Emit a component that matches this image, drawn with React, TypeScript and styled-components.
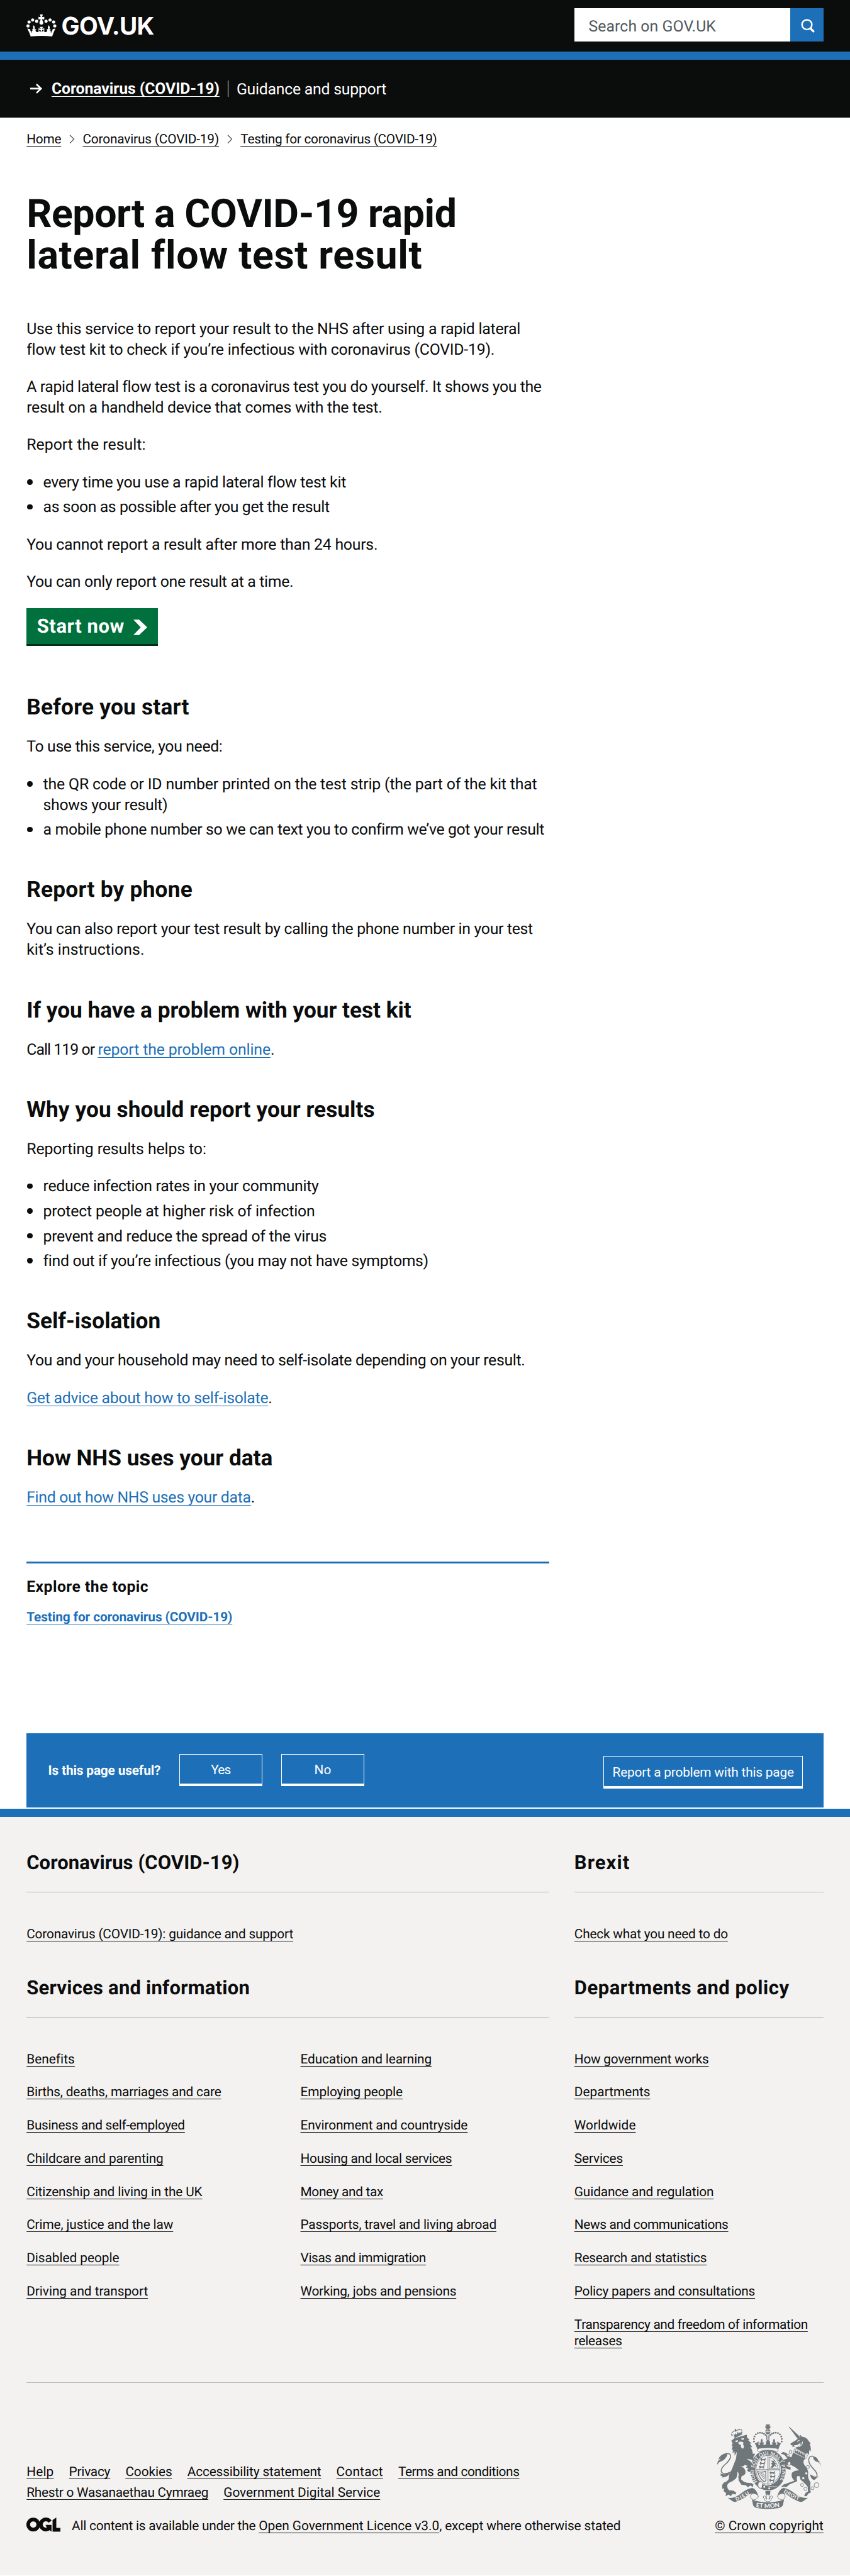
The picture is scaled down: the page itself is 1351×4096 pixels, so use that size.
import React, { useLayoutEffect, useRef, useState } from "react";
import styled, { createGlobalStyle, css } from "styled-components";

/* Design units to CSS pixels. */
const SCALE = 0.65958;
const u = (n: number) => `${(n * SCALE).toFixed(3)}px`;

const ink = "#0b0c0c";
const blue = "#1d70b8";
const paper = "#f3f2f1";
const rule = "#b1b4b6";
const crest = "#6f777b";

const GlobalStyle = createGlobalStyle`
  *, *::before, *::after { box-sizing: border-box; }
  html, body { margin: 0; padding: 0; background: #fff; }
  body {
    font-family: Roboto, "Liberation Sans", Arial, sans-serif;
    color: ${ink};
    text-rendering: geometricPrecision;
    -webkit-font-smoothing: antialiased;
  }
  h1, h2, h3, p, ul { margin: 0; padding: 0; }
  ul { list-style: none; }
`;

/* ---------- text run tracked to a set measure ---------- */

const Run = styled.span<{ $track: number }>`
  letter-spacing: ${(p) => p.$track.toFixed(4)}px;
  white-space: pre;
`;

function T({ w, children }: { w: number; children: string }) {
  const ref = useRef<HTMLSpanElement>(null);
  const [track, setTrack] = useState(0);
  useLayoutEffect(() => {
    if (!ref.current) return;
    const natural = ref.current.getBoundingClientRect().width;
    setTrack((w * SCALE - natural) / children.length);
  }, []);
  return (
    <Run ref={ref} $track={track}>
      {children}
    </Run>
  );
}

const small = css`
  font-size: ${u(31.6)};
  line-height: ${u(40)};
`;

const Link = styled.a<{ $tone?: string }>`
  color: ${(p) => p.$tone ?? ink};
  text-decoration: underline;
  text-decoration-thickness: 1.4px;
  text-underline-offset: ${u(5.4)};
  text-decoration-skip-ink: none;
`;

/* ---------- header ---------- */

const Header = styled.header`
  display: flex;
  justify-content: space-between;
  height: ${u(144)};
  padding: ${u(20)} ${u(64)} 0;
  background: ${ink};
  border-bottom: ${u(20)} solid ${blue};
`;

const Brand = styled.a`
  display: flex;
  align-items: flex-start;
  gap: ${u(12)};
  color: #fff;
`;

const CrownIcon = styled.svg`
  width: ${u(72)};
  height: ${u(53.3)};
  margin-top: ${u(15)};
`;

const BrandName = styled.span`
  margin-top: ${u(14.3)};
  font: 700 ${u(58.6)} / ${u(60)} Inter, Roboto, sans-serif;
`;

const Search = styled.form`
  display: flex;
  width: ${u(600)};
  height: ${u(80)};
`;

const SearchField = styled.div`
  flex: 1;
  padding: ${u(5.5)} 0 0 ${u(34)};
  background: #fff;
  color: #505a5f;
  font-size: ${u(37.6)};
  line-height: ${u(80)};
`;

const SearchButton = styled.button`
  display: flex;
  align-items: center;
  justify-content: center;
  width: ${u(80)};
  padding: 0 0 0 ${u(5)};
  border: 0;
  background: ${blue};
`;

const SearchIcon = styled.svg`
  width: ${u(34)};
  height: ${u(34)};
  margin-top: ${u(4)};
`;

const SuperNav = styled.nav`
  display: flex;
  align-items: flex-start;
  height: ${u(140)};
  padding: ${u(47)} 0 0 ${u(73)};
  background: ${ink};
  color: #fff;
  font-size: ${u(37.6)};
  line-height: ${u(50)};
`;

const ArrowIcon = styled.svg`
  width: ${u(29)};
  height: ${u(24)};
  margin: ${u(11.4)} ${u(22.2)} 0 0;
`;

const SuperNavTitle = styled.span`
  font-weight: 700;
`;

const SuperNavSection = styled.span`
  height: ${u(40)};
  margin: ${u(2.5)} 0 0 ${u(20.5)};
  padding: ${u(2.3)} 0 0 ${u(19)};
  border-left: ${u(2)} solid #fff;
  line-height: ${u(42.6)};
`;

const Breadcrumbs = styled.nav`
  display: flex;
  align-items: center;
  padding: ${u(33.3)} ${u(64)} 0;
  ${small}
`;

const CrumbChevron = styled.svg`
  width: ${u(13)};
  height: ${u(22)};
  margin: 0 ${u(19.5)} ${u(3)};
`;

/* ---------- main ---------- */

const Main = styled.main`
  width: ${u(1388)};
  padding: 0 ${u(64)};
`;

const Title = styled.h1`
  margin-top: ${u(110.4)};
  margin-bottom: ${u(102)};
  font-size: ${u(95)};
  line-height: ${u(100)};
  font-weight: 700;
`;

const Section = styled.section`
  display: flex;
  flex-direction: column;
  gap: ${u(40)};
  margin-bottom: ${u(88.2)};
  font-size: ${u(37.6)};
  line-height: ${u(50)};
`;

const Heading = styled.h2`
  margin-bottom: ${u(1.8)};
  font-size: ${u(53.4)};
  line-height: ${u(60)};
  font-weight: 700;
`;

const Line = styled.span`
  display: block;
  white-space: nowrap;
`;

const Bullets = styled.ul`
  display: flex;
  flex-direction: column;
  gap: ${u(10)};
`;

const Bullet = styled.li`
  display: flex;
  align-items: flex-start;
  gap: ${u(25.5)};

  &::before {
    content: "";
    width: ${u(13)};
    height: ${u(13)};
    margin: ${u(15.7)} 0 0 ${u(1.5)};
    border-radius: 50%;
    background: ${ink};
  }
`;

const StartButton = styled.a`
  display: flex;
  align-items: flex-start;
  gap: ${u(22)};
  width: ${u(316.4)};
  height: ${u(90)};
  margin-top: ${u(-3)};
  margin-bottom: ${u(30.7)};
  padding: ${u(13.7)} ${u(25)} 0;
  background: #00703c;
  border-bottom: 3px solid #002d18;
  color: #fff;
  font-size: ${u(47)};
  line-height: ${u(60)};
  font-weight: 700;
`;

const StartChevron = styled.svg`
  width: ${u(34)};
  height: ${u(38)};
  margin-top: ${u(12.3)};
`;

const Explore = styled.aside`
  margin-top: ${u(127)};
  margin-bottom: ${u(258.5)};
  padding-top: ${u(33.4)};
  border-top: 3px solid ${blue};
  font-weight: 700;
`;

const ExploreTitle = styled.h3`
  margin-bottom: ${u(27.1)};
  font-size: ${u(37.4)};
  line-height: ${u(50)};
`;

const ExploreTopic = styled.p`
  ${small}
`;

/* ---------- feedback ---------- */

const Feedback = styled.section`
  display: flex;
  align-items: flex-start;
  height: ${u(180)};
  margin: 0 ${u(64)} ${u(2)};
  padding: ${u(50)} ${u(49.5)} 0 ${u(52)};
  background: ${blue};
  color: #fff;
  ${small}
`;

const Question = styled.h2`
  margin: ${u(22)} ${u(45)} 0 0;
  font-size: inherit;
  font-weight: 700;
`;

const FeedbackButton = styled.button<{ $width: number }>`
  display: flex;
  align-items: center;
  justify-content: center;
  width: ${(p) => u(p.$width)};
  height: ${u(78)};
  margin-right: ${u(46)};
  padding: ${u(4)} 0 0;
  background: transparent;
  border: 1px solid #fff;
  border-bottom-width: 4px;
  color: inherit;
  font: inherit;

  &:last-child {
    margin: ${u(6)} 0 0 auto;
  }
`;

/* ---------- footer ---------- */

const Footer = styled.footer`
  padding: ${u(80.6)} ${u(64)} ${u(98)};
  background: ${paper};
  border-top: ${u(20)} solid ${blue};
  ${small}
`;

const FooterGrid = styled.div`
  display: grid;
  grid-template-columns: ${u(1260)} ${u(600)};
  column-gap: ${u(60)};
`;

const FooterHeading = styled.h2`
  margin-bottom: ${u(82)};
  padding-bottom: ${u(39.8)};
  border-bottom: 1px solid ${rule};
  font-size: ${u(47)};
  line-height: ${u(60)};
  font-weight: 700;
`;

const FooterBlock = styled.div`
  margin-bottom: ${u(78.4)};
`;

const Columns = styled.div`
  display: grid;
  grid-template-columns: 1fr 1fr;
  column-gap: ${u(60)};
`;

const LinkList = styled.ul`
  display: flex;
  flex-direction: column;
  gap: ${u(40)};
`;

const Base = styled.div`
  display: flex;
  align-items: flex-end;
  justify-content: space-between;
  padding-top: ${u(100.3)};
  border-top: 1px solid ${rule};
`;

const Meta = styled.div`
  display: flex;
  flex-direction: column;
`;

const MetaLinks = styled.ul`
  display: flex;
  gap: ${u(36.6)};
  margin-bottom: ${u(10)};
`;

const Licence = styled.div`
  display: flex;
  align-items: flex-start;
  gap: ${u(27)};
  margin-top: ${u(30)};
  white-space: pre;
`;

const OglMark = styled.svg`
  width: ${u(82)};
  height: ${u(34)};
  margin-top: ${u(-1.3)};
`;

const Copyright = styled.div`
  display: flex;
  flex-direction: column;
  align-items: flex-end;
`;

const CrestArt = styled.svg`
  width: ${u(250)};
  height: ${u(204)};
  margin: 0 ${u(6)} ${u(21.3)} 0;
`;

/* ---------- drawings ---------- */

const Crown = () => (
  <CrownIcon viewBox="24 45 216 160" fill="#fff">
    {[
      [35, 128], [43, 100], [69, 85], [98, 94],
      [229, 128], [221, 100], [195, 85], [166, 94],
    ].map(([x, y]) => (
      <circle key={`${x}`} cx={x} cy={y} r="11.5" />
    ))}
    <path d="M121 45H143L137 63Q146 65 153 61V82Q146 78 137 80Q139 88 144 96Q149 108 142 116Q132 123 122 116Q115 108 120 96Q125 88 127 80Q118 78 111 82V61Q118 65 127 63Z" />
    <path d="M30 147L50 151L55 165Q62 171 68 161L64 154Q70 149 74 152Q67 138 76 122Q90 138 82 152Q87 148 95 154L89 162Q95 178 112 170V144L122 149Q126 149 128 148L118 135H146L136 148Q140 150 153 144V170Q169 178 175 162L169 154Q176 148 182 152Q174 138 186 122Q197 138 190 152Q195 149 200 154L196 161Q202 171 209 165L214 151L233 147Q222 170 210 204Q132 196 55 204Q45 172 30 147Z" />
    <path d="M113 157L126 158L130 169Q118 171 113 157ZM151 157L138 158L134 169Q146 171 151 157ZM50 154l9 22 8 -4q-10 -3 -17 -18zM214 154l-9 22 -8 -4q10 -3 17 -18z" fill={ink} />
  </CrownIcon>
);

const bead = [
  [650, 262], [649, 243], [653, 225], [663, 210], [677, 201], [693, 198], [709, 200], [722, 206], [733, 214],
];

const LionRow = ({ x, y }: { x: number; y: number }) => (
  <path
    transform={`translate(${x} ${y})`}
    d="M0 8L8 2L16 8H30L38 0L42 3L37 10L44 15L36 14L34 19L42 24H32L26 16L14 17L10 24H2L8 16L2 15Z"
  />
);

const Crest = () => (
  <CrestArt viewBox="384 138 750 612" fill={crest}>
    {/* lion */}
    <path d="M485 256L508 238L597 212L600 232L618 250L608 254L634 276L619 276L638 303L624 303Q641 325 640 350L659 351L646 372L645 395L600 387L626 405L650 440L662 490L642 482L636 500L626 490L630 474L614 482L598 470L610 458L592 450L602 438L584 430L572 440L553 440L572 450Q592 470 588 490Q582 506 560 512L556 535Q575 556 600 560L632 562L646 574L640 592L624 579L606 592L590 578L558 574L540 545L536 515Q545 498 530 478Q530 515 518 530Q495 550 470 560Q455 570 456 585Q456 602 470 615L500 617L522 632L516 645L496 640L482 656L466 645L444 656L448 635L430 620L434 600L420 604L420 575L433 558Q458 552 468 530L470 500L490 462L520 385L526 335L510 364L508 330L496 350L497 318L487 322L497 292L487 296L495 272Z" />
    <path d="M513 256L535 252L530 266L518 265ZM556 240L578 236L574 248L562 249ZM535 270L548 262L565 264L575 270L570 280Q582 300 572 312Q560 314 555 300L556 285L543 283Z" fill={paper} />
    <path d="M600 387L626 405L656 452" fill="none" stroke={paper} strokeWidth="3" />
    <path d="M505 218L560 200L565 210L510 237Z" />
    <path d="M508 220L500 205L512 213L516 200L524 212L532 190L540 206L548 192L556 204L562 190L560 206Z" />
    <path d="M514 168L522 172L520 178L528 180L525 186L517 186L516 194L510 190L511 183L506 179L513 177Z" />
    {[[491, 218], [488, 208], [492, 197], [500, 189], [534, 178], [545, 174], [556, 176], [562, 185], [562, 196]].map(([x, y], i) => (
      <circle key={i} cx={x} cy={y} r="4.6" />
    ))}
    <path d="M384 430Q382 402 409 386Q398 384 390 394Q402 355 450 345Q466 350 450 372Q436 396 416 403Q396 408 384 430Z" />
    <path d="M446 349Q482 344 481 370Q476 398 440 428Q405 460 414 482Q430 505 484 482" fill="none" stroke={crest} strokeWidth="7" />
    <path d="M399 491Q415 500 440 498L480 480L462 508Q440 525 414 520L424 512L404 508L412 502Z" />

    {/* unicorn */}
    <path d="M899 153L906 156L985 230L966 243Z" />
    <path d="M915 274L950 254L966 242L985 232L982 211L999 228Q1030 230 1044 256L1060 277L1052 279Q1063 300 1060 331L1050 322L1046 360L1034 345L1024 352L990 332L945 308L975 297Q990 285 985 270Q962 292 940 288L946 297L922 302L932 292L914 287Z" />
    <path d="M962 262L978 252M975 298Q1002 290 1000 262" fill="none" stroke={paper} strokeWidth="5" />
    <path d="M942 314L1037 363L1024 386L932 342Z" fill={paper} stroke={crest} strokeWidth="3" />
    <path d="M941 338L948 322L956 334L966 328L970 342L982 336L986 350L998 342L1002 358L1014 352L1020 372L1018 380Z" />
    <path d="M932 342L1022 386Q996 402 1015 432Q1042 462 1042 490Q1034 522 1058 556L1056 600L1060 630L1042 638L1030 658L1012 656L1022 634L1040 622L1038 590L1018 565L986 537L980 512L962 512Q956 530 962 548L905 572L886 590L846 590L862 574L884 566L942 545Q914 520 924 488Q940 470 976 470Q950 445 915 430L884 432L896 444L914 448L914 466L890 461L868 442L862 420L874 407L858 395L892 385L868 356L842 351L860 337L886 345L892 366L920 376Z" />
    <g fill={paper} stroke={crest} strokeWidth="4">
      <ellipse cx="914" cy="337" rx="10" ry="12" />
      <ellipse cx="896" cy="362" rx="8" ry="10" />
      <ellipse cx="904" cy="421" rx="11" ry="13" />
      <circle cx="1039" cy="446" r="11" />
      <circle cx="1028" cy="492" r="10" />
      <circle cx="1006" cy="527" r="10" />
      <ellipse cx="997" cy="575" rx="10" ry="12" />
      <circle cx="1022" cy="604" r="12" />
      <circle cx="1072" cy="599" r="11" />
      <circle cx="1102" cy="577" r="18" />
    </g>
    <path d="M1134 441Q1130 416 1104 408Q1078 400 1076 370Q1106 368 1114 400L1125 408L1120 411Q1134 420 1134 441Z" />
    <path d="M1080 369Q1046 362 1045 396Q1046 425 1078 458Q1112 490 1104 514" fill="none" stroke={crest} strokeWidth="7" />
    <path d="M1055 498L1085 514L1120 516L1103 523L1097 532L1084 541Q1058 530 1055 498Z" />

    {/* garter and shield */}
    <ellipse cx="751" cy="468" rx="128" ry="147" />
    <ellipse cx="751" cy="466" rx="93" ry="110" fill={paper} />
    <ellipse cx="751" cy="466" rx="87" ry="104" fill="none" stroke={crest} strokeWidth="4" />
    <path d="M751 362V570M664 466H838" stroke={crest} strokeWidth="5" />
    <LionRow x={695} y={380} />
    <LionRow x={690} y={407} />
    <LionRow x={684} y={434} />
    <LionRow x={762} y={476} />
    <LionRow x={764} y={503} />
    <LionRow x={758} y={530} />
    <path d="M760 458V374Q805 380 826 458Z" fill="none" stroke={crest} strokeWidth="4" />
    <path d="M768 450L782 432L772 420L784 412L770 398L790 402L800 392L796 410L812 424L800 428L816 446L796 438L786 452Z" />
    <path d="M676 478Q700 488 734 478L736 540Q728 556 720 550Q690 530 676 478Z" fill="none" stroke={crest} strokeWidth="6" />
    <path d="M688 486L724 536M698 486L728 528M710 486L730 514" stroke={crest} strokeWidth="4" />
    <path d="M690 566Q748 600 822 590Q790 616 751 616Q715 612 690 592Z" />
    <path d="M708 553Q674 548 678 580Q684 606 706 596" fill={paper} stroke={crest} strokeWidth="5" />
    <path d="M700 565Q750 592 818 588" fill="none" stroke={paper} strokeWidth="3" />
    <circle cx="724" cy="589" r="7" fill={paper} />
    <circle cx="760" cy="600" r="7" fill={paper} />
    <defs>
      <path id="garter" d="M674 553A102 119 0 1 1 830 551" />
      <path id="dieu" d="M524 693Q575 668 632 633" />
      <path id="droit" d="M862 628Q925 668 988 692" />
      <path id="etmon" d="M664 736Q750 746 838 735" />
    </defs>
    <g fill={paper} fontFamily="Lato, sans-serif" fontWeight="700">
      <text fontSize="34">
        <textPath href="#garter" textLength="496">HONI SOIT QUI MAL Y PENSE</textPath>
      </text>
    </g>

    {/* state crown */}
    <path d="M734 138H766L758 152L768 147V167L757 160L764 172H736L743 160L732 167V147L742 152Z" />
    <path d="M731 189Q733 174 748 172V189ZM769 189Q767 174 753 172V189ZM731 194H769Q764 210 750 210Q736 210 731 194Z" />
    <path d="M739 216H746V246H739ZM754 216H761V246H754Z" />
    {bead.map(([x, y], i) => (
      <g key={i}>
        <circle cx={x} cy={y} r="6.4" />
        <circle cx={1500 - x} cy={y} r="6.4" />
      </g>
    ))}
    <path d="M656 276L684 262L681 282L694 286L688 266L700 270Q694 254 706 240Q717 254 710 270L722 266L716 286L736 284V256L746 262L738 248H762L754 262L766 256V284L784 286L778 266L790 270Q783 254 794 240Q806 254 800 270L812 266L806 286L819 282L816 262L844 276Q832 296 826 318Q750 296 674 318Q668 296 656 276Z" />
    <path d="M690 310Q750 302 810 310Q826 312 824 328Q820 338 808 332Q750 316 692 332Q680 338 676 328Q674 312 690 310Z" fill={paper} stroke={crest} strokeWidth="4" />

    {/* motto scroll */}
    <path d="M460 669Q500 676 545 645Q600 600 636 597Q664 600 682 656Q640 624 610 648Q580 672 540 690Q505 708 485 686Z" />
    <path d="M1040 669Q1000 676 955 645Q900 600 864 597Q836 600 818 656Q860 624 890 648Q920 672 960 690Q995 708 1015 686Z" />
    <path d="M630 643Q615 672 646 684Q672 682 682 656Q656 628 630 643ZM870 643Q885 672 854 684Q828 682 818 656Q844 628 870 643Z" fill={paper} stroke={crest} strokeWidth="4" />
    <path d="M634 682Q750 722 867 682Q862 706 859 722Q850 738 830 743Q750 756 670 743Q648 738 642 718Q640 700 634 682Z" />
    <path d="M732 620H768L766 646H734Z" />
    <path d="M750 640Q768 660 756 678Q770 680 764 664Q772 648 783 660Q784 672 774 676Q776 694 750 698Q724 694 726 676Q716 672 717 660Q728 648 736 664Q730 680 744 678Q732 660 750 640Z" fill={paper} stroke={crest} strokeWidth="4" />
    <g fill={paper} fontFamily="Lato, sans-serif" fontWeight="900">
      <text fontSize="36"><textPath href="#dieu" textLength="106">DIEU</textPath></text>
      <text fontSize="36"><textPath href="#droit" textLength="124">DROIT</textPath></text>
      <text fontSize="44"><textPath href="#etmon" textLength="172">ET MON</textPath></text>
    </g>
  </CrestArt>
);

const Chevron = () => (
  <CrumbChevron viewBox="0 0 13 22" fill="none" stroke="#505a5f" strokeWidth="2">
    <path d="M1.5 1L11.5 11L1.5 21" />
  </CrumbChevron>
);

/* ---------- content ---------- */

type Item = [string, number];

const services: Item[][] = [
  [
    ["Benefits", 115],
    ["Births, deaths, marriages and care", 469],
    ["Business and self-employed", 381.4],
    ["Childcare and parenting", 329.8],
    ["Citizenship and living in the UK", 423.5],
    ["Crime, justice and the law", 353.3],
    ["Disabled people", 223.4],
    ["Driving and transport", 292.6],
  ],
  [
    ["Education and learning", 316.1],
    ["Employing people", 246.2],
    ["Environment and countryside", 402.9],
    ["Housing and local services", 365],
    ["Money and tax", 199.2],
    ["Passports, travel and living abroad", 472.2],
    ["Visas and immigration", 302.4],
    ["Working, jobs and pensions", 375.5],
  ],
];

const policy: Item[][] = [
  [["How government works", 324]],
  [["Departments", 183]],
  [["Worldwide", 148]],
  [["Services", 117]],
  [["Guidance and regulation", 336]],
  [["News and communications", 371]],
  [["Research and statistics", 319]],
  [["Policy papers and consultations", 435.5]],
  [["Transparency and freedom of information", 562.5], ["releases", 115]],
];

const metaLinks: Item[][] = [
  [
    ["Help", 65.6],
    ["Privacy", 99.5],
    ["Cookies", 112.5],
    ["Accessibility statement", 322.5],
    ["Contact", 112.5],
    ["Terms and conditions", 292],
  ],
  [
    ["Rhestr o Wasanaethau Cymraeg", 438],
    ["Government Digital Service", 377.5],
  ],
];

export default function App() {
  return (
    <>
      <GlobalStyle />
      <Header>
        <Brand>
          <Crown />
          <BrandName>
            <T w={223}>GOV.UK</T>
          </BrandName>
        </Brand>
        <Search>
          <SearchField>
            <T w={307}>Search on GOV.UK</T>
          </SearchField>
          <SearchButton type="button">
            <SearchIcon viewBox="0 0 34 34" fill="none" stroke="#fff">
              <circle cx="14.5" cy="14" r="11.8" strokeWidth="3.8" />
              <path d="M22.5 22.5L31.5 31.5" strokeWidth="5" />
            </SearchIcon>
          </SearchButton>
        </Search>
      </Header>

      <SuperNav>
        <ArrowIcon viewBox="0 0 29 24" fill="none" stroke="#fff" strokeWidth="4">
          <path d="M0 12H26M15 1.5L26 12L15 22.5" />
        </ArrowIcon>
        <SuperNavTitle>
          <Link $tone="#fff">
            <T w={404.8}>Coronavirus (COVID-19)</T>
          </Link>
        </SuperNavTitle>
        <SuperNavSection>
          <T w={361}>Guidance and support</T>
        </SuperNavSection>
      </SuperNav>

      <Breadcrumbs>
        <Link><T w={83.3}>Home</T></Link>
        <Chevron />
        <Link><T w={328.3}>Coronavirus (COVID-19)</T></Link>
        <Chevron />
        <Link><T w={473.5}>Testing for coronavirus (COVID-19)</T></Link>
      </Breadcrumbs>

      <Main>
        <Title>
          <Line><T w={1036}>Report a COVID-19 rapid</T></Line>
          <Line><T w={953}>lateral flow test result</T></Line>
        </Title>

        <Section>
          <p>
            <Line><T w={1190}>Use this service to report your result to the NHS after using a rapid lateral</T></Line>
            <Line><T w={1127}>flow test kit to check if you’re infectious with coronavirus (COVID-19).</T></Line>
          </p>
          <p>
            <Line><T w={1240}>A rapid lateral flow test is a coronavirus test you do yourself. It shows you the</T></Line>
            <Line><T w={857}>result on a handheld device that comes with the test.</T></Line>
          </p>
          <p><T w={287}>Report the result:</T></p>
          <Bullets>
            <Bullet><T w={729}>every time you use a rapid lateral flow test kit</T></Bullet>
            <Bullet><T w={690}>as soon as possible after you get the result</T></Bullet>
          </Bullets>
          <p><T w={846}>You cannot report a result after more than 24 hours.</T></p>
          <p><T w={643}>You can only report one result at a time.</T></p>
          <StartButton>
            <T w={211}>Start now</T>
            <StartChevron viewBox="0 0 34 38" fill="#fff">
              <path d="M0 0H14L34 19L14 38H0L18 19Z" />
            </StartChevron>
          </StartButton>
        </Section>

        <Section>
          <Heading><T w={392}>Before you start</T></Heading>
          <p><T w={472}>To use this service, you need:</T></p>
          <Bullets>
            <Bullet>
              <div>
                <Line><T w={1190}>the QR code or ID number printed on the test strip (the part of the kit that</T></Line>
                <Line><T w={300}>shows your result)</T></Line>
              </div>
            </Bullet>
            <Bullet><T w={1206}>a mobile phone number so we can text you to confirm we’ve got your result</T></Bullet>
          </Bullets>
        </Section>

        <Section>
          <Heading><T w={400}>Report by phone</T></Heading>
          <p>
            <Line><T w={1220}>You can also report your test result by calling the phone number in your test</T></Line>
            <Line><T w={284}>kit’s instructions.</T></Line>
          </p>
        </Section>

        <Section>
          <Heading><T w={927}>If you have a problem with your test kit</T></Heading>
          <p>
            <T w={171.7}>Call 119 or </T>
            <Link $tone={blue}><T w={416.1}>report the problem online</T></Link>.
          </p>
        </Section>

        <Section>
          <Heading><T w={839}>Why you should report your results</T></Heading>
          <p><T w={433}>Reporting results helps to:</T></p>
          <Bullets>
            <Bullet><T w={664}>reduce infection rates in your community</T></Bullet>
            <Bullet><T w={655}>protect people at higher risk of infection</T></Bullet>
            <Bullet><T w={683}>prevent and reduce the spread of the virus</T></Bullet>
            <Bullet><T w={927}>find out if you’re infectious (you may not have symptoms)</T></Bullet>
          </Bullets>
        </Section>

        <Section>
          <Heading><T w={323}>Self-isolation</T></Heading>
          <p><T w={1201}>You and your household may need to self-isolate depending on your result.</T></p>
          <p><Link $tone={blue}><T w={582.4}>Get advice about how to self-isolate</T></Link>.</p>
        </Section>

        <Section>
          <Heading><T w={593}>How NHS uses your data</T></Heading>
          <p><Link $tone={blue}><T w={540.5}>Find out how NHS uses your data</T></Link>.</p>
        </Section>

        <Explore>
          <ExploreTitle><T w={294}>Explore the topic</T></ExploreTitle>
          <ExploreTopic>
            <Link $tone={blue}><T w={495.8}>Testing for coronavirus (COVID-19)</T></Link>
          </ExploreTopic>
        </Explore>
      </Main>

      <Feedback>
        <Question><T w={271}>Is this page useful?</T></Question>
        <FeedbackButton $width={200}><T w={47}>Yes</T></FeedbackButton>
        <FeedbackButton $width={200}><T w={41}>No</T></FeedbackButton>
        <FeedbackButton $width={480.5}><T w={437}>Report a problem with this page</T></FeedbackButton>
      </Feedback>

      <Footer>
        <FooterGrid>
          <FooterBlock>
            <FooterHeading><T w={513}>Coronavirus (COVID-19)</T></FooterHeading>
            <Link><T w={642.6}>Coronavirus (COVID-19): guidance and support</T></Link>
          </FooterBlock>
          <FooterBlock>
            <FooterHeading><T w={134}>Brexit</T></FooterHeading>
            <Link><T w={370}>Check what you need to do</T></Link>
          </FooterBlock>
          <FooterBlock>
            <FooterHeading><T w={538}>Services and information</T></FooterHeading>
            <Columns>
              {services.map((column, i) => (
                <LinkList key={i}>
                  {column.map(([label, w]) => (
                    <li key={label}><Link><T w={w}>{label}</T></Link></li>
                  ))}
                </LinkList>
              ))}
            </Columns>
          </FooterBlock>
          <FooterBlock>
            <FooterHeading><T w={518}>Departments and policy</T></FooterHeading>
            <LinkList>
              {policy.map((lines) => (
                <li key={lines[0][0]}>
                  {lines.map(([label, w]) => (
                    <Line key={label}><Link><T w={w}>{label}</T></Link></Line>
                  ))}
                </li>
              ))}
            </LinkList>
          </FooterBlock>
        </FooterGrid>
        <Base>
          <Meta>
            {metaLinks.map((row, i) => (
              <MetaLinks key={i}>
                {row.map(([label, w]) => (
                  <li key={label}><Link><T w={w}>{label}</T></Link></li>
                ))}
              </MetaLinks>
            ))}
            <Licence>
              <OglMark viewBox="0 0 82 34" fill="none" stroke={ink} strokeWidth="9">
                <circle cx="16.5" cy="17" r="12.2" />
                <path d="M57 10A12.2 12.2 0 1 0 55 26" />
                <path d="M46 18H60.5V34L50 26Z" fill={ink} stroke="none" />
                <path d="M63 6L72 0V25H82V34H63Z" fill={ink} stroke="none" />
              </OglMark>
              <div>
                <T w={450.5}>All content is available under the </T>
                <Link><T w={435}>Open Government Licence v3.0</T></Link>
                <T w={437}>, except where otherwise stated</T>
              </div>
            </Licence>
          </Meta>
          <Copyright>
            <Crest />
            <Link><T w={261.7}>© Crown copyright</T></Link>
          </Copyright>
        </Base>
      </Footer>
    </>
  );
}
